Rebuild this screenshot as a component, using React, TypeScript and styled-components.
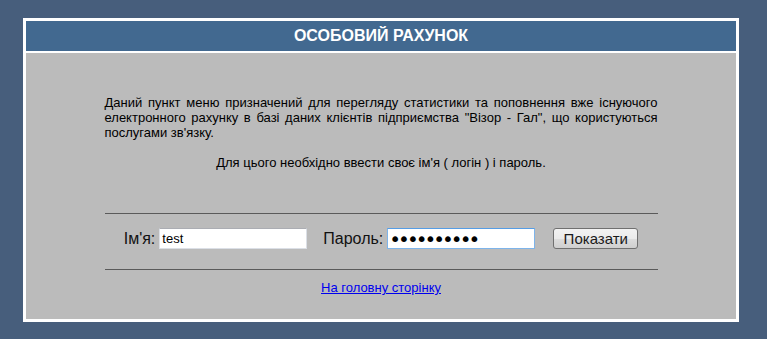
import React from "react";
import styled, { createGlobalStyle } from "styled-components";

const Global = createGlobalStyle`
  html, body { margin: 0; padding: 0; background: #475e7c; }
  body { font-family: "Liberation Sans", Arial, sans-serif; }
`;

const Frame = styled.div`
  margin: 18px 0 0 23px;
  width: 710px;
  border: 3px solid #fff;
  background: #fff;
  display: flex;
  flex-direction: column;
  gap: 2px;
`;

const Header = styled.div`
  height: 30px;
  background: #426990;
  color: #fff;
  font-weight: bold;
  font-size: 16px;
  display: flex;
  align-items: center;
  justify-content: center;
`;

const Body = styled.div`
  height: 266px;
  background: #bbbbbb;
  display: flex;
  flex-direction: column;
  align-items: center;
  padding-top: 42px;
  box-sizing: border-box;
`;

const Content = styled.div`
  width: 553px;
  display: flex;
  flex-direction: column;
`;

const Para = styled.p<{ $center?: boolean }>`
  margin: 0 0 15px;
  font-size: 13px;
  line-height: 15px;
  color: #000;
  text-align: ${(p) => (p.$center ? "center" : "justify")};
`;

const Rule = styled.div<{ $top: number }>`
  margin-top: ${(p) => p.$top}px;
  height: 1px;
  background: #5a5a5a;
`;

const FormRow = styled.div`
  margin-top: 14px;
  height: 21px;
  display: flex;
  align-items: center;
  justify-content: center;
`;

const Label = styled.label<{ $ml?: number }>`
  font-size: 16px;
  color: #111;
  margin-left: ${(p) => p.$ml ?? 0}px;
  margin-right: 4px;
`;

const Field = styled.input<{ $focused?: boolean }>`
  box-sizing: border-box;
  width: 148px;
  height: 21px;
  padding: 0 2px;
  border: 1px solid ${(p) => (p.$focused ? "#7eb4ea" : "#dbdfe6")};
  border-top-color: ${(p) => (p.$focused ? "#569de5" : "#abadb3")};
  background: #fff;
  font-family: "Liberation Sans", Arial, sans-serif;
  font-size: 13px;
  color: #000;
  outline: none;
  &[type="password"] {
    font-family: "DejaVu Sans", sans-serif;
    font-size: 20px;
    letter-spacing: -3px;
    padding-left: 1px;
  }
`;

const Button = styled.button`
  box-sizing: border-box;
  margin-left: 18px;
  width: 85px;
  height: 21px;
  border: 1px solid #707070;
  border-radius: 3px;
  background: linear-gradient(#f2f2f2 0%, #ebebeb 50%, #dddddd 51%, #cfcfcf 100%);
  font-family: "Liberation Sans", Arial, sans-serif;
  font-size: 15px;
  color: #1a1a1a;
  padding: 0;
`;

const LinkRow = styled.div`
  margin-top: 10px;
  text-align: center;
  font-size: 13px;
  line-height: 16px;
`;

const Link = styled.a`
  color: #0000ee;
  text-decoration: underline;
`;

export default function App() {
  return (
    <>
      <Global />
      <Frame>
        <Header>ОСОБОВИЙ РАХУНОК</Header>
        <Body>
          <Content>
            <Para>
              Даний пункт меню призначений для перегляду статистики та поповнення вже існуючого
              електронного рахунку в базі даних клієнтів підприємства "Візор - Гал", що користуються
              послугами зв'язку.
            </Para>
            <Para $center>Для цього необхідно ввести своє ім'я ( логін ) і пароль.</Para>
            <Rule $top={28} />
            <FormRow>
              <Label>Ім'я:</Label>
              <Field type="text" defaultValue="test" />
              <Label $ml={16}>Пароль:</Label>
              <Field type="password" defaultValue="1234567890" $focused />
              <Button type="button">Показати</Button>
            </FormRow>
            <Rule $top={20} />
            <LinkRow>
              <Link href="#">На головну сторінку</Link>
            </LinkRow>
          </Content>
        </Body>
      </Frame>
    </>
  );
}
